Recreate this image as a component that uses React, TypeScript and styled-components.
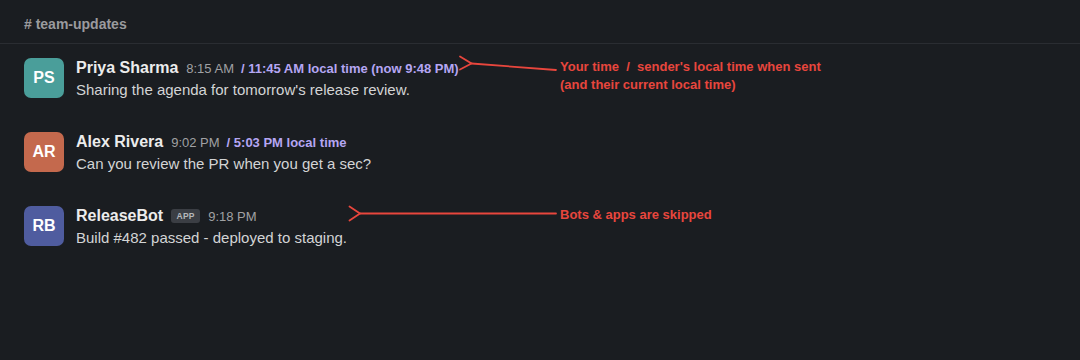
import React from "react";
import styled, { createGlobalStyle } from "styled-components";

const Global = createGlobalStyle`
  html, body { margin: 0; padding: 0; background: #1a1d21; }
  body { font-family: "Liberation Sans", Arial, sans-serif; }
  * { box-sizing: border-box; }
`;

const Page = styled.div`
  position: relative;
  width: 1080px;
  height: 360px;
  background: #1a1d21;
  overflow: hidden;
`;

const Header = styled.div`
  height: 44px;
  padding: 16px 24px 0;
  border-bottom: 1px solid #2a2d32;
  color: #9a9b9e;
  font-weight: 700;
  font-size: 14px;
  line-height: 17px;
`;

const List = styled.div`
  display: flex;
  flex-direction: column;
`;

const Message = styled.div`
  display: flex;
  gap: 12px;
  padding: 14px 24px 16px;
  height: 74px;
`;

const Avatar = styled.div<{ $bg: string }>`
  flex: none;
  width: 40px;
  height: 40px;
  border-radius: 7px;
  background: ${(p) => p.$bg};
  color: #ffffff;
  font-weight: 700;
  font-size: 16px;
  display: flex;
  align-items: center;
  justify-content: center;
`;

const Content = styled.div`
  display: flex;
  flex-direction: column;
`;

const Meta = styled.div`
  display: flex;
  align-items: baseline;
  gap: 8px;
  height: 20px;
  line-height: 20px;
`;

const Name = styled.span`
  color: #ececec;
  font-weight: 700;
  font-size: 16px;
`;

const Time = styled.span`
  color: #a0a1a4;
  font-size: 13px;
`;

const LocalTime = styled.span`
  color: #b5a6f3;
  font-weight: 700;
  font-size: 13px;
  margin-left: -1px;
`;

const Badge = styled.span`
  align-self: center;
  display: inline-flex;
  align-items: center;
  justify-content: center;
  width: 29px;
  height: 14px;
  border-radius: 3px;
  background: #3b3e44;
  color: #b5b7ba;
  font-weight: 700;
  font-size: 8.5px;
  letter-spacing: 0.3px;
  line-height: 14px;
`;

const Body = styled.div`
  margin-top: 1px;
  color: #d3d4d5;
  font-size: 15px;
  line-height: 22px;
`;

const Note = styled.div<{ $top: number }>`
  position: absolute;
  left: 560px;
  top: ${(p) => p.$top}px;
  color: #e8463d;
  font-weight: 700;
  font-size: 13px;
  line-height: 18px;
  white-space: pre;
`;

const Overlay = styled.svg`
  position: absolute;
  left: 0;
  top: 0;
  pointer-events: none;
`;

type Msg = {
  initials: string;
  color: string;
  name: string;
  time: string;
  local?: string;
  app?: boolean;
  text: string;
};

const messages: Msg[] = [
  {
    initials: "PS",
    color: "#4a9e9a",
    name: "Priya Sharma",
    time: "8:15 AM",
    local: "/ 11:45 AM local time (now 9:48 PM)",
    text: "Sharing the agenda for tomorrow's release review.",
  },
  {
    initials: "AR",
    color: "#c4694d",
    name: "Alex Rivera",
    time: "9:02 PM",
    local: "/ 5:03 PM local time",
    text: "Can you review the PR when you get a sec?",
  },
  {
    initials: "RB",
    color: "#4f5c9f",
    name: "ReleaseBot",
    time: "9:18 PM",
    app: true,
    text: "Build #482 passed - deployed to staging.",
  },
];

export default function App() {
  return (
    <Page>
      <Global />
      <Header># team-updates</Header>
      <List>
        {messages.map((m) => (
          <Message key={m.name}>
            <Avatar $bg={m.color}>{m.initials}</Avatar>
            <Content>
              <Meta>
                <Name>{m.name}</Name>
                {m.app && <Badge>APP</Badge>}
                <Time>{m.time}</Time>
                {m.local && <LocalTime>{m.local}</LocalTime>}
              </Meta>
              <Body>{m.text}</Body>
            </Content>
          </Message>
        ))}
      </List>
      <Overlay width="1080" height="360" viewBox="0 0 1080 360">
        <g stroke="#e8463d" strokeWidth="1.8" fill="none" strokeLinecap="round">
          <polyline points="460,56.5 471.5,63.5 460,69.5" />
          <line x1="471.5" y1="63.5" x2="556" y2="70" />
          <polyline points="349.5,206.5 360,213.5 349.5,220.5" />
          <line x1="360" y1="213.5" x2="556" y2="213.5" />
        </g>
      </Overlay>
      <Note $top={58}>{"Your time  /  sender's local time when sent\n(and their current local time)"}</Note>
      <Note $top={206}>Bots &amp; apps are skipped</Note>
    </Page>
  );
}
